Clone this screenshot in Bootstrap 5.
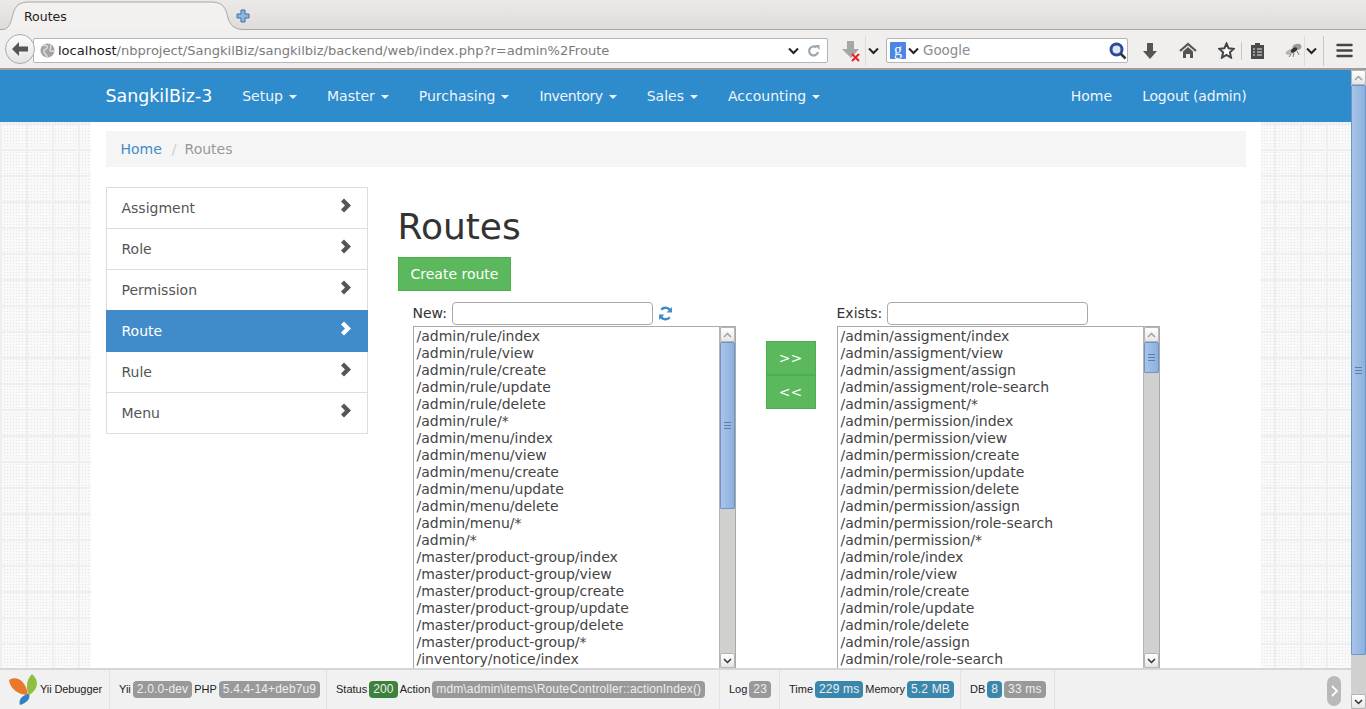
<!DOCTYPE html>
<html lang="en">
<head>
    <meta charset="UTF-8">
    <title>Routes</title>
    <link href="https://cdn.jsdelivr.net/npm/bootstrap@5.3.0/dist/css/bootstrap.min.css" rel="stylesheet">
    <style>
        html, body { height: 709px; overflow: hidden; }
        body { font-family: "DejaVu Sans", sans-serif; font-size: 14px; color: #333; background: #f0efed; }

        /* browser chrome */
        .tab-strip { height: 30px; background: linear-gradient(#ebeae8, #dddcda); box-shadow: inset 0 -1px #a8a8a6; position: relative; }
        .tab-shape { position: absolute; left: 0; top: 0; }
        .tab-title { position: relative; padding-left: 24px; padding-top: 9px; width: 235px; font-size: 12.5px; line-height: 16px; color: #222; }
        .new-tab { position: relative; margin-top: 8px; }
        .tool-strip { height: 40px; background: #f0efed; border-bottom: 2px solid #9c9c9a; padding-left: 5px; padding-top: 3px; }
        .back-btn { width: 30px; height: 30px; border-radius: 50%; border: 1px solid #a9a9a9; background: linear-gradient(#fbfbfb, #e4e4e4); margin-top: -3px; z-index: 1; flex-shrink: 0; }
        .url-box { width: 795px; height: 25px; margin-left: -2px; background: #fff; border: 1px solid #b4b4b4; border-radius: 2px; padding-left: 6px; padding-right: 7px; font-size: 13.05px; }
        .url-host { color: #222; margin-top: 1px; }
        .url-rest { color: #7b7b7b; margin-top: 1px; }
        .search-box { width: 242px; height: 25px; margin-left: 7px; background: #fff; border: 1px solid #b4b4b4; border-radius: 2px; padding: 0 0 0 3px; color: #8b8b8b; font-size: 13.4px; }
        .search-hint { margin-top: 2px; }
        .tool-sep { width: 1px; height: 30px; background: #dcdbd9; flex-shrink: 0; }
        .tool-sep-short { height: 18px; background: #c8c8c6; }
        .gtile { width: 16px; height: 17px; border-radius: 1px; background: #4a86e8; color: #fff; font: 400 16px/15px "Liberation Serif", serif; text-align: center; }
        .g-caret { margin: 0 4px 0 2px; }

        /* page */
        .page-view { height: 639px; position: relative; overflow: hidden; }
        .page-main { flex: 1 1 auto; min-width: 0; background-color: #f9f9f9;
            background-image: linear-gradient(#efefef 2px, transparent 2px), linear-gradient(90deg, #efefef 2px, transparent 2px), radial-gradient(#e6e6e6 .8px, transparent 1px);
            background-size: 26px 26px, 26px 26px, 3px 3px; background-position: 0 1px, 0 0, 0 0; }
        .top-nav { height: 52px; background: #2e8bcc; padding: 0; }
        .wrap-1170 { max-width: 1170px; width: 1170px; margin: 0 auto; padding: 0 15px; }
        .top-nav .navbar-brand { color: #fff; font-size: 17.4px; font-weight: 500; padding: 0; margin-right: 15px; }
        .top-nav .nav-link { color: #eef5fb; padding: 0 15px; line-height: 52px; font-size: 14px; }
        .top-nav .dropdown-toggle::after { margin-left: 6px; border-width: 4px 4px 0; vertical-align: 2px; }
        .nav-right { margin-right: -16px; }
        .logout-link { letter-spacing: -.2px; }
        .top-nav .nav-tight { letter-spacing: -.4px; }
        .page-body { background: #fff; height: 587px; padding-top: 9px; }
        .crumbs { background: #f5f5f5; padding: 8px 15px; margin-bottom: 20px; height: 36px; line-height: 20px; }
        .crumbs .breadcrumb-item + .breadcrumb-item { padding-left: 10px; }
        .crumbs .breadcrumb-item + .breadcrumb-item::before { color: #ccc; padding-right: 8px; }
        .crumbs a { color: #428bca; text-decoration: none; }
        .crumbs .active { color: #999; }
        .side-col { width: 262px; flex-shrink: 0; }
        .side-menu { border-radius: 0; }
        .side-menu .list-group-item { height: 41px; padding: 10px 15px; line-height: 20px; color: #555; border-color: #ddd; }
        .side-menu .list-group-item:first-child { height: 42px; }
        .side-menu .list-group-item.active { height: 42px; background: #428bca; border-color: #428bca; color: #fff; }
        .main-col { margin-left: 30px; width: 848px; }
        .main-title { font-size: 36px; line-height: 40px; margin: 20px 0 10px; font-weight: 500; color: #333; }
        .btn-leaf { background: #5cb85c; border: 1px solid #4cae4c; color: #fff; border-radius: 0; font-size: 14px; line-height: 20px; padding: 6px 12px; }
        .btn-leaf:hover { background: #5cb85c; color: #fff; }
        .picker-row { padding-left: 15px; margin-top: 11px; }
        .picker-col { width: 323px; flex-shrink: 0; }
        .picker-label { height: 24px; gap: 5px; line-height: 23px; }
        .picker-input { width: 201px; height: 23px; border: 1px solid #a9a9a9; border-radius: 4px; background: #fff; padding: 0 4px; outline: none; }
        .route-box { height: 343px; border: 1px solid #a9a9a9; background: #fff; overflow: hidden; }
        .route-lines { flex: 1 1 auto; padding: 1px 3px; line-height: 17px; color: #444; white-space: nowrap; overflow: hidden; }
        .fake-bar { width: 16px; flex-shrink: 0; background: #d0d0ce; border-left: 1px solid #b5b5b5; }
        .bar-btn { height: 15px; background: linear-gradient(#fff, #e6e6e6); border: 1px solid #b5b5b5; border-radius: 2px; flex-shrink: 0; }
        .bar-thumb { background: linear-gradient(90deg, #a9c4e8, #8cb0de); border: 1px solid #6f93c4; border-radius: 1px; flex-shrink: 0; }
        .bar-grip { width: 7px; height: 7px; border-top: 1px solid #5b7fae; border-bottom: 1px solid #5b7fae; position: relative; }
        .bar-grip::after { content: ""; position: absolute; left: 0; right: 0; top: 2px; height: 1px; background: #5b7fae; }
        .thumb-new { height: 167px; }
        .thumb-exists { height: 31px; }
        .move-col { width: 50px; margin: 39px 21px 0 30px; flex-shrink: 0; }
        .move-col .btn-group-vertical { width: 50px; }
        .move-col .btn-group-vertical .move-btn { width: 50px; height: 34px; margin-top: 0; background: #5cb85c; border: 1px solid #4cae4c; border-radius: 0; color: #fff; font-size: 14px; line-height: 20px; padding: 0; }
        .page-bar { width: 15px; flex-shrink: 0; background: #d0d0ce; }
        .thumb-page { height: 570px; }

        /* debug toolbar */
        .yii-bar { position: absolute; left: 0; right: 15px; bottom: 0; height: 41px; background: #f1f1f1; border-top: 2px solid #d6d6d6; font-family: "Liberation Sans", sans-serif; font-size: 11px; color: #222; }
        .yii-block { height: 39px; border-right: 1px solid #e2e2e2; padding-left: 9px; gap: 2px; white-space: nowrap; }
        .yii-brand { padding-left: 8px; }
        .yii-name { letter-spacing: -.1px; margin-left: 1px; }
        .yii-label { background: #999; color: #eee; border-radius: 4px; height: 17px; line-height: 17px; padding: 0 4px; font-size: 12px; letter-spacing: .15px; }
        .yii-ok { background: #3c813c; }
        .yii-info { background: #3a87ad; }
        .yii-collapse { position: absolute; right: 10px; top: 6px; width: 14px; height: 30px; border-radius: 7px; background: #b9b9b9; }
    </style>
</head>
<body>
    <!-- Browser chrome -->
    <div class="tab-strip d-flex">
        <svg class="tab-shape" width="250" height="30" viewBox="0 0 250 30">
            <path d="M0 30V29.500H2C8 29.500 10 25 12 18C14 9 16 3 27 2H213C224 3 226 9 228 18C230 25 234 29.500 244 29.500V30z" fill="#f2f1ef"/>
            <path d="M0 29.500H2C8 29.500 10 25 12 18C14 9 16 3 27 2H213C224 3 226 9 228 18C230 25 234 29.500 244 29.500" fill="none" stroke="#a8a8a6"/>
        </svg>
        <div class="tab-title">Routes</div>
        <svg class="new-tab" width="16" height="16" viewBox="0 0 16 16">
            <path d="M6 2h4v4h4v4h-4v4H6v-4H2V6h4z" fill="#8fb4dd" stroke="#3f6ea6"/>
        </svg>
    </div>
    <div class="tool-strip d-flex align-items-center">
        <div class="back-btn d-flex align-items-center justify-content-center">
            <svg width="18" height="16" viewBox="0 0 18 16"><path d="M8 1 1 8l7 7V10.500h9v-5H8z" fill="#555"/></svg>
        </div>
        <div class="url-box d-flex align-items-center">
            <svg width="15" height="15" viewBox="0 0 15 15" class="flex-shrink-0" style="margin-right:3px"><circle cx="7.500" cy="7.500" r="7" fill="#a3a3a3"/><path d="M3 3c3-2 5 0 4 2S3 6 4 9s3 2 3 5M10 2c2 2 0 3 0 5s3 1 4 1" fill="none" stroke="#dedede" stroke-width="1.500"/></svg>
            <span class="url-host">localhost</span><span class="url-rest">/nbproject/SangkilBiz/sangkilbiz/backend/web/index.php?r=admin%2Froute</span>
            <svg class="ms-auto" width="11" height="8" viewBox="0 0 11 8"><path d="M1 1.500 5.500 6 10 1.500" fill="none" stroke="#222" stroke-width="2"/></svg>
            <svg class="ms-2" width="13" height="14" viewBox="0 0 13 14"><path d="M11 8a4.500 4.500 0 1 1-1.500-4.500" fill="none" stroke="#9aa7b2" stroke-width="2.200"/><path d="M8 1h4.500v5z" fill="#9aa7b2"/></svg>
        </div>
        <svg style="margin-left:13px" width="20" height="22" viewBox="0 0 20 22"><path d="M6 1h7v8h5l-8 9-9-9h5z" fill="#a6a6a6"/><path d="M11 14l7 7M18 14l-7 7" stroke="#e22" stroke-width="2"/></svg>
        <div class="tool-sep ms-1"></div>
        <svg style="margin-left:2px" width="11" height="8" viewBox="0 0 11 8"><path d="M1 1.500 5.500 6 10 1.500" fill="none" stroke="#222" stroke-width="2"/></svg>
        <div class="search-box d-flex align-items-center">
            <div class="gtile flex-shrink-0">g</div>
            <svg class="g-caret flex-shrink-0" width="11" height="8" viewBox="0 0 11 8"><path d="M1 1.500 5.500 6 10 1.500" fill="none" stroke="#222" stroke-width="2"/></svg>
            <span class="search-hint">Google</span>
            <svg class="ms-auto" width="18" height="18" viewBox="0 0 18 18"><circle cx="7.500" cy="7.500" r="5.500" fill="#dbe6f5" stroke="#2c4a9a" stroke-width="3"/><path d="M11.500 11.500 16.500 16.500" stroke="#333" stroke-width="2.500"/></svg>
        </div>
        <svg style="margin-left:14px" width="16" height="18" viewBox="0 0 16 18"><path d="M5 1h6v8h4l-7 8-7-8h4z" fill="#555"/></svg>
        <svg style="margin-left:21px" width="18" height="17" viewBox="0 0 18 17"><path d="M1 9 9 2l8 7" fill="none" stroke="#555" stroke-width="2.200"/><path d="M4 9.500 9 5l5 4.500V16h-3v-4H7v4H4z" fill="#555"/></svg>
        <svg style="margin-left:21px" width="17" height="17" viewBox="0 0 17 17"><path d="M8.500 1.500 10.600 6.300 15.800 6.800 11.900 10.300 13 15.500 8.500 12.800 4 15.500 5.100 10.300 1.200 6.800 6.400 6.300z" fill="#fff" stroke="#444" stroke-width="2"/></svg>
        <div class="tool-sep tool-sep-short" style="margin-left:6px"></div>
        <svg style="margin-left:8px" width="15" height="18" viewBox="0 0 15 18"><path d="M1 3h4V1h5v2h4v14H1z" fill="#4a4a4a"/><path d="M3 7h2M7 7h5M3 10h2M7 10h5M3 13h2M7 13h5" stroke="#e8e8e8"/></svg>
        <svg style="margin-left:20px" width="17" height="15" viewBox="0 0 17 15"><ellipse cx="5" cy="9" rx="4.500" ry="2.500" fill="#b5b5b5" transform="rotate(-20 5 9)"/><ellipse cx="12" cy="4" rx="4.500" ry="3" fill="#9a9a9a" transform="rotate(-15 12 4)"/><ellipse cx="9" cy="7" rx="3.500" ry="2" fill="#333" transform="rotate(-35 9 7)"/><path d="M6 11 4 14M9 10l-1 4M12 8l2 4" stroke="#777"/></svg>
        <div class="tool-sep" style="margin-left:2px"></div>
        <svg style="margin-left:1px" width="11" height="8" viewBox="0 0 11 8"><path d="M1 1.500 5.500 6 10 1.500" fill="none" stroke="#222" stroke-width="2"/></svg>
        <div class="tool-sep" style="margin-left:6px;background:#c9c8c6"></div>
        <svg style="margin-left:12px" width="17" height="15" viewBox="0 0 17 15"><path d="M1.500 2h14M1.500 7.500h14M1.500 13h14" stroke="#444" stroke-width="2.500" stroke-linecap="round"/></svg>
    </div>

    <!-- Page -->
    <div class="page-view d-flex">
        <div class="page-main">
            <nav class="navbar top-nav">
                <div class="wrap-1170 d-flex align-items-center">
                    <a class="navbar-brand" href="#">SangkilBiz-3</a>
                    <ul class="nav">
                        <li class="nav-item"><a class="nav-link dropdown-toggle" href="#">Setup</a></li>
                        <li class="nav-item"><a class="nav-link dropdown-toggle" href="#">Master</a></li>
                        <li class="nav-item"><a class="nav-link dropdown-toggle" href="#">Purchasing</a></li>
                        <li class="nav-item"><a class="nav-link dropdown-toggle nav-tight" href="#">Inventory</a></li>
                        <li class="nav-item"><a class="nav-link dropdown-toggle" href="#">Sales</a></li>
                        <li class="nav-item"><a class="nav-link dropdown-toggle" href="#">Accounting</a></li>
                    </ul>
                    <ul class="nav ms-auto nav-right">
                        <li class="nav-item"><a class="nav-link" href="#">Home</a></li>
                        <li class="nav-item"><a class="nav-link logout-link" href="#">Logout (admin)</a></li>
                    </ul>
                </div>
            </nav>
            <div class="wrap-1170 page-body">
                <ol class="breadcrumb crumbs">
                    <li class="breadcrumb-item"><a href="#">Home</a></li>
                    <li class="breadcrumb-item active">Routes</li>
                </ol>
                <div class="d-flex">
                    <div class="side-col">
                        <div class="list-group side-menu" id="sideMenu"></div>
                    </div>
                    <div class="main-col">
                        <h1 class="main-title">Routes</h1>
                        <a class="btn btn-leaf" href="#">Create route</a>
                        <div class="d-flex picker-row">
                            <div class="picker-col">
                                <div class="picker-label d-flex align-items-start">
                                    <span>New:</span>
                                    <input class="picker-input" type="text">
                                    <svg style="margin-top:4px" width="15" height="15" viewBox="0 0 14 14"><path d="M12 5.500A5.200 5.200 0 0 0 3 3.500M2 8.500A5.200 5.200 0 0 0 11 10.500" fill="none" stroke="#428bca" stroke-width="2.200"/><path d="M13 1v5H8zM1 13V8h5z" fill="#428bca"/></svg>
                                </div>
                                <div class="route-box d-flex">
                                    <div class="route-lines" id="newRoutes"></div>
                                    <div class="fake-bar d-flex flex-column">
                                        <div class="bar-btn d-flex align-items-center justify-content-center"><svg width="9" height="6" viewBox="0 0 9 6"><path d="M1 5 4.500 1.500 8 5" fill="none" stroke="#a0a0a0" stroke-width="1.500"/></svg></div>
                                        <div class="bar-thumb thumb-new d-flex align-items-center justify-content-center"><span class="bar-grip"></span></div>
                                        <div class="flex-grow-1"></div>
                                        <div class="bar-btn d-flex align-items-center justify-content-center"><svg width="9" height="6" viewBox="0 0 9 6"><path d="M1 1 4.500 4.500 8 1" fill="none" stroke="#333" stroke-width="1.500"/></svg></div>
                                    </div>
                                </div>
                            </div>
                            <div class="move-col">
                                <div class="btn-group-vertical">
                                    <button class="btn move-btn" type="button">&gt;&gt;</button>
                                    <button class="btn move-btn" type="button">&lt;&lt;</button>
                                </div>
                            </div>
                            <div class="picker-col">
                                <div class="picker-label d-flex align-items-start">
                                    <span>Exists:</span>
                                    <input class="picker-input" type="text">
                                </div>
                                <div class="route-box d-flex">
                                    <div class="route-lines" id="existRoutes"></div>
                                    <div class="fake-bar d-flex flex-column">
                                        <div class="bar-btn d-flex align-items-center justify-content-center"><svg width="9" height="6" viewBox="0 0 9 6"><path d="M1 5 4.500 1.500 8 5" fill="none" stroke="#a0a0a0" stroke-width="1.500"/></svg></div>
                                        <div class="bar-thumb thumb-exists d-flex align-items-center justify-content-center"><span class="bar-grip"></span></div>
                                        <div class="flex-grow-1"></div>
                                        <div class="bar-btn d-flex align-items-center justify-content-center"><svg width="9" height="6" viewBox="0 0 9 6"><path d="M1 1 4.500 4.500 8 1" fill="none" stroke="#333" stroke-width="1.500"/></svg></div>
                                    </div>
                                </div>
                            </div>
                        </div>
                    </div>
                </div>
            </div>
        </div>
        <div class="page-bar d-flex flex-column">
            <div class="bar-btn d-flex align-items-center justify-content-center"><svg width="9" height="6" viewBox="0 0 9 6"><path d="M1 5 4.500 1.500 8 5" fill="none" stroke="#a0a0a0" stroke-width="1.500"/></svg></div>
            <div class="bar-thumb thumb-page d-flex align-items-center justify-content-center"><span class="bar-grip"></span></div>
            <div class="flex-grow-1"></div>
            <div class="bar-btn d-flex align-items-center justify-content-center"><svg width="9" height="6" viewBox="0 0 9 6"><path d="M1 1 4.500 4.500 8 1" fill="none" stroke="#333" stroke-width="1.500"/></svg></div>
        </div>

        <!-- Yii debug toolbar -->
        <div class="yii-bar d-flex">
            <div class="yii-block yii-brand d-flex align-items-center" style="width:110px">
                <svg width="30" height="32" viewBox="0 0 30 32" class="flex-shrink-0" style="margin-right:-1px">
                    <path d="M1 6C8 1 18 6 20 21 11 21 2 15 1 6z" fill="#e8792a"/>
                    <path d="M24 0C31 6 31 15 21 21 17 13 19 5 24 0z" fill="#8fbf3f"/>
                    <path d="M21 20C23 25 18 29 12 31 10 26 14 21 21 20z" fill="#2f82c4"/>
                </svg>
                <span class="yii-name">Yii Debugger</span>
            </div>
            <div class="yii-block d-flex align-items-center" style="width:217px">
                <span>Yii</span><span class="yii-label">2.0.0-dev</span><span>PHP</span><span class="yii-label">5.4.4-14+deb7u9</span>
            </div>
            <div class="yii-block d-flex align-items-center" style="width:393px">
                <span>Status</span><span class="yii-label yii-ok">200</span><span>Action</span><span class="yii-label">mdm\admin\items\RouteController::actionIndex()</span>
            </div>
            <div class="yii-block d-flex align-items-center" style="width:60px">
                <span>Log</span><span class="yii-label">23</span>
            </div>
            <div class="yii-block d-flex align-items-center" style="width:181px">
                <span>Time</span><span class="yii-label yii-info">229 ms</span><span>Memory</span><span class="yii-label yii-info">5.2 MB</span>
            </div>
            <div class="yii-block d-flex align-items-center" style="width:94px">
                <span>DB</span><span class="yii-label yii-info">8</span><span class="yii-label">33 ms</span>
            </div>
            <div class="yii-collapse d-flex align-items-center justify-content-center">
                <svg width="7" height="12" viewBox="0 0 7 12"><path d="M1 1l5 5-5 5" fill="none" stroke="#fff" stroke-width="1.800"/></svg>
            </div>
        </div>
    </div>

    <script src="https://cdn.jsdelivr.net/npm/bootstrap@5.3.0/dist/js/bootstrap.bundle.min.js"></script>
    <script>
        const menuItems = ['Assigment', 'Role', 'Permission', 'Route', 'Rule', 'Menu'];
        const newRoutes = ['/admin/rule/index', '/admin/rule/view', '/admin/rule/create', '/admin/rule/update', '/admin/rule/delete', '/admin/rule/*',
            '/admin/menu/index', '/admin/menu/view', '/admin/menu/create', '/admin/menu/update', '/admin/menu/delete', '/admin/menu/*', '/admin/*',
            '/master/product-group/index', '/master/product-group/view', '/master/product-group/create', '/master/product-group/update',
            '/master/product-group/delete', '/master/product-group/*', '/inventory/notice/index'];
        const existRoutes = ['/admin/assigment/index', '/admin/assigment/view', '/admin/assigment/assign', '/admin/assigment/role-search', '/admin/assigment/*',
            '/admin/permission/index', '/admin/permission/view', '/admin/permission/create', '/admin/permission/update', '/admin/permission/delete',
            '/admin/permission/assign', '/admin/permission/role-search', '/admin/permission/*', '/admin/role/index', '/admin/role/view',
            '/admin/role/create', '/admin/role/update', '/admin/role/delete', '/admin/role/assign', '/admin/role/role-search'];

        // side menu
        document.getElementById('sideMenu').innerHTML = menuItems.map(name => `
            <a href="#" class="list-group-item d-flex justify-content-between ${name === 'Route' ? 'active' : ''}">
                <span>${name}</span>
                <svg width="12" height="15" viewBox="0 0 12 15"><path d="M4 .5 11 7.500 4 14.500 1 11.500 5 7.500 1 3.500z" fill="currentColor"/></svg>
            </a>`).join('');

        // route lists
        const fillRoutes = (id, routes) => {
            document.getElementById(id).innerHTML = routes.map(r => `<div>${r}</div>`).join('');
        };
        fillRoutes('newRoutes', newRoutes);
        fillRoutes('existRoutes', existRoutes);
    </script>
</body>
</html>
